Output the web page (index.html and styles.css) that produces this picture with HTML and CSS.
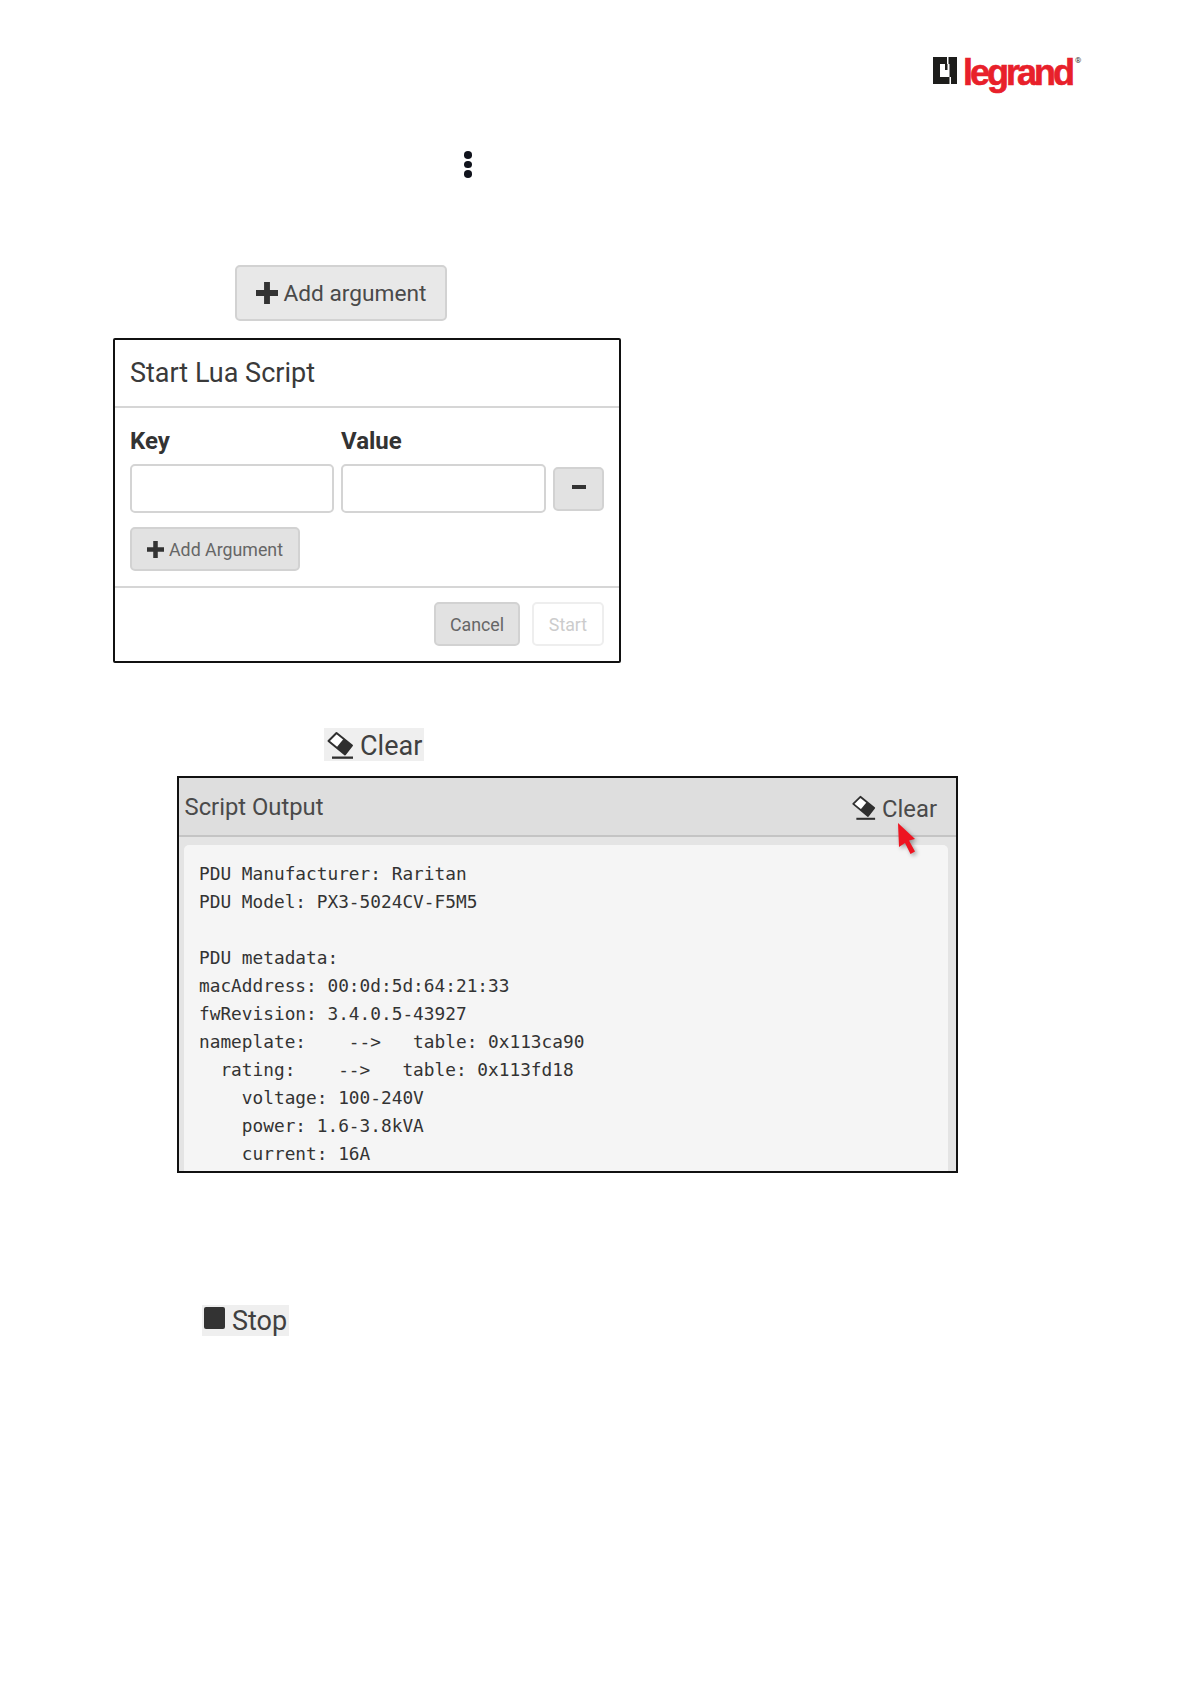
FILE: index.html
```html
<!DOCTYPE html>
<html lang="en">
<head>
<meta charset="utf-8">
<title>Start Lua Script</title>
<link rel="stylesheet" href="styles.css">
</head>
<body>
<main class="page">
  <header class="brand">
    <svg class="brand-mark" viewBox="0 0 24 27" aria-hidden="true">
      <path fill="#1d1d1b" d="M0 0h24v27H0z"/>
      <path fill="#fff" d="M7 7h9.500v13H7zM14 0h1.500v7H14zM16.500 20H18v7h-1.500z"/>
      <path fill="#1d1d1b" d="M12 7h2.500v6H12z"/>
    </svg>
    <span class="brand-name">legrand</span>
    <span class="brand-reg">®</span>
  </header>

  <div class="kebab" aria-hidden="true"><i></i><i></i><i></i></div>

  <div class="add-row">
    <button class="btn btn-large" type="button">
      <svg class="plus plus-large" viewBox="0 0 12 12" aria-hidden="true"><path d="M4.400 0h3.200v4.400H12v3.200H7.600V12H4.400V7.600H0V4.400h4.400z"/></svg>
      Add argument
    </button>
  </div>

  <section class="dialog">
    <h2 class="dialog-title">Start Lua Script</h2>
    <div class="dialog-body">
      <div class="args">
        <div class="field-label">Key</div>
        <div class="field-label">Value</div>
        <div></div>
        <input class="field" type="text" aria-label="Key">
        <input class="field" type="text" aria-label="Value">
        <button class="btn btn-minus" type="button" aria-label="Remove"><i></i></button>
      </div>
      <button class="btn btn-add" type="button">
        <svg class="plus plus-small" viewBox="0 0 12 12" aria-hidden="true"><path d="M4.400 0h3.200v4.400H12v3.200H7.600V12H4.400V7.600H0V4.400h4.400z"/></svg>
        Add Argument
      </button>
    </div>
    <div class="dialog-foot">
      <button class="btn btn-foot" type="button">Cancel</button>
      <button class="btn btn-foot btn-disabled" type="button">Start</button>
    </div>
  </section>

  <div class="chip chip-clear">
    <svg class="eraser eraser-large" viewBox="0 0 28 28" aria-hidden="true">
      <path fill="#fff" stroke="#2f2f2f" stroke-width="2" stroke-linejoin="round" d="M10.500 2 26 14.500 19 23.500 2.500 10z"/>
      <path fill="#2f2f2f" d="M17.500 8 26 14.500 19 23.500 10.500 16.500z"/>
      <path fill="#2f2f2f" d="M6 25.500h21v2.300H6z"/>
    </svg>
    <span class="chip-label">Clear</span>
  </div>

  <section class="output">
    <div class="output-head">
      <span class="output-title">Script Output</span>
      <span class="output-clear">
        <svg class="eraser eraser-small" viewBox="0 0 28 28" aria-hidden="true">
          <path fill="#fff" stroke="#2f2f2f" stroke-width="2" stroke-linejoin="round" d="M10.500 2 26 14.500 19 23.500 2.500 10z"/>
          <path fill="#2f2f2f" d="M17.500 8 26 14.500 19 23.500 10.500 16.500z"/>
          <path fill="#2f2f2f" d="M6 25.500h21v2.300H6z"/>
        </svg>
        <span class="output-clear-label">Clear</span>
      </span>
      <svg class="cursor" viewBox="0 0 20 32" aria-hidden="true">
        <path fill="#ee1420" d="M1 0 18 16l-6 1.500 6 11-4.500 2.500-5.500-11L2 24z"/>
      </svg>
    </div>
    <pre class="output-text">PDU Manufacturer: Raritan
PDU Model: PX3-5024CV-F5M5

PDU metadata:
macAddress: 00:0d:5d:64:21:33
fwRevision: 3.4.0.5-43927
nameplate:    --&gt;   table: 0x113ca90
  rating:    --&gt;   table: 0x113fd18
    voltage: 100-240V
    power: 1.6-3.8kVA
    current: 16A</pre>
  </section>

  <div class="chip chip-stop">
    <i class="stop-square"></i>
    <span>Stop</span>
  </div>
</main>
</body>
</html>
```
FILE: styles.css
```css
* { box-sizing: border-box; }

html, body {
  margin: 0;
  background: #fff;
}

.page {
  width: 1190px;
  height: 1684px;
  overflow: hidden;
  font-family: Roboto, "Liberation Sans", sans-serif;
  color: #3a3a3a;
}

/* Brand */
.brand {
  display: flex;
  align-items: flex-start;
  height: 96px;
  padding: 57px 0 0 933px;
}
.brand-mark {
  width: 24px;
  height: 27px;
  flex: none;
}
.brand-name {
  margin: -6px 0 0 6px;
  font-family: "Liberation Sans", sans-serif;
  font-size: 36px;
  line-height: 44px;
  font-weight: 700;
  letter-spacing: -3px;
  color: #e8202a;
  -webkit-text-stroke: 0.6px #e8202a;
}
.brand-reg {
  margin: 0 0 0 3px;
  font-size: 8px;
  line-height: 8px;
  color: #333;
}

/* Kebab */
.kebab {
  display: flex;
  flex-direction: column;
  gap: 2px;
  width: 8px;
  margin: 55px 0 0 464px;
}
.kebab i {
  width: 8px;
  height: 7.500px;
  border-radius: 50%;
  background: #10131c;
}

/* Buttons */
.btn {
  display: inline-flex;
  align-items: center;
  justify-content: center;
  font-family: inherit;
  color: #555;
  background: #e2e2e2;
  border: 2px solid #d2d2d2;
  border-radius: 5px;
  padding: 0;
}

.add-row {
  margin: 87.500px 0 0 235px;
}
.btn-large {
  width: 212px;
  height: 56px;
  gap: 6px;
  font-size: 22.700px;
  background: #e8e8e8;
  color: #4a4a4a;
}
.plus {
  fill: #333;
  flex: none;
}
.plus-large { width: 22px; height: 22px; }
.plus-small { width: 17px; height: 17px; }

/* Dialog */
.dialog {
  width: 508px;
  height: 325px;
  margin: 17px 0 0 113px;
  border: 2px solid #111;
  border-radius: 2px;
  display: flex;
  flex-direction: column;
}
.dialog-title {
  margin: 0;
  height: 68px;
  padding: 0 15px;
  border-bottom: 2px solid #d6d6d6;
  font-size: 27px;
  line-height: 66px;
  font-weight: 400;
  color: #3a3a3a;
}
.dialog-body {
  flex: 1;
  padding: 18px 15px 0;
}
.args {
  display: grid;
  grid-template-columns: 204px 205px 51px;
  grid-template-rows: 38px 49px;
  column-gap: 7px;
  align-items: center;
}
.field-label {
  font-size: 24px;
  font-weight: 700;
  color: #333;
  align-self: start;
  line-height: 30px;
}
.field {
  height: 49px;
  width: 100%;
  border: 2px solid #d4d4d4;
  border-radius: 5px;
  background: #fff;
}
.btn-minus {
  height: 44px;
  width: 51px;
}
.btn-minus i {
  width: 14px;
  height: 4px;
  background: #333;
  margin-top: -3px;
}
.btn-add {
  width: 170px;
  height: 44px;
  margin-top: 14px;
  gap: 5px;
  font-size: 17.800px;
  color: #666;
}
.dialog-foot {
  flex: none;
  height: 75px;
  border-top: 2px solid #d6d6d6;
  padding: 14px 15px 0;
  display: flex;
  justify-content: flex-end;
  gap: 12px;
}
.btn-foot {
  width: 86px;
  height: 44px;
  font-size: 17.800px;
  color: #666;
}
.btn-disabled {
  width: 72px;
  background: #fff;
  border-color: #eee;
  color: #ccc;
}

/* Chips */
.chip {
  display: flex;
  align-items: center;
  background: #efefef;
  font-size: 27px;
  color: #404040;
}
.chip-clear {
  width: 100px;
  height: 33px;
  margin: 65px 0 0 324px;
  padding-left: 2px;
  gap: 6px;
}
.chip-label {
  margin-top: 3px;
}
.chip-stop {
  width: 87px;
  height: 31px;
  margin: 132px 0 0 202px;
  padding-left: 2px;
  gap: 7px;
}
.stop-square {
  width: 21px;
  height: 22px;
  border-radius: 2px;
  background: #333;
  margin-top: -5px;
  flex: none;
}
.eraser { flex: none; }
.eraser-large { width: 28px; height: 28px; }
.eraser-small { width: 25px; height: 25px; }

/* Output panel */
.output {
  width: 781px;
  height: 397px;
  margin: 15px 0 0 177px;
  border: 2px solid #111;
  background: #e4e4e4;
  overflow: hidden;
}
.output-head {
  position: relative;
  height: 59px;
  background: #dedede;
  border-bottom: 2px solid #c4c4c4;
  display: flex;
  align-items: center;
  justify-content: space-between;
  padding: 0 19px 0 5.500px;
  font-size: 23.800px;
  color: #4a4a4a;
}
.output-clear {
  display: flex;
  align-items: center;
  gap: 6px;
  margin-top: 2px;
}
.output-clear-label {
  margin-top: 3px;
}
.cursor {
  position: absolute;
  top: 45px;
  left: 718px;
  width: 20px;
  height: 32px;
  filter: drop-shadow(2px 2px 2px rgba(0, 0, 0, .35));
}
.output-text {
  margin: 8px 8px 0 5px;
  height: 340px;
  padding: 15px 15px;
  background: #f5f5f5;
  border-radius: 5px 5px 0 0;
  font-family: "DejaVu Sans Mono", "Liberation Mono", monospace;
  font-size: 17.800px;
  line-height: 27.950px;
  color: #333;
  overflow: hidden;
}
```
